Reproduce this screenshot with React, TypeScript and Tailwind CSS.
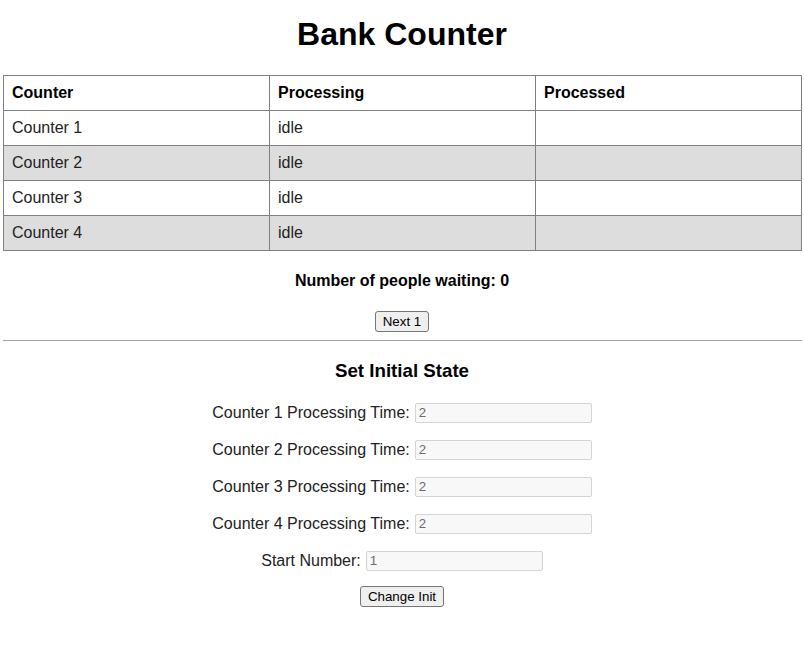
import { useState } from 'react';

type Counter = { name: string; processing: string; processed: string };

export default function App() {
  const [counters] = useState<Counter[]>([
    { name: 'Counter 1', processing: 'idle', processed: '' },
    { name: 'Counter 2', processing: 'idle', processed: '' },
    { name: 'Counter 3', processing: 'idle', processed: '' },
    { name: 'Counter 4', processing: 'idle', processed: '' },
  ]);
  const [times, setTimes] = useState(['2', '2', '2', '2']);
  const [startNumber, setStartNumber] = useState('1');
  const waiting = 0;

  const btn =
    'border border-[#767676] rounded-[3px] bg-[#efefef] px-[7px] py-[1px] leading-[17px] text-[13.33px] text-black';
  const input =
    'w-[177px] h-[20px] border border-[#d4d4d4] rounded-[2px] bg-[#f8f8f8] px-[3px] text-[13.33px] text-[#6d6d6d] outline-none';

  return (
    <div className="min-h-screen bg-white text-black font-['Liberation_Sans',Arial,sans-serif]">
      <h1 className="pt-[16px] text-center text-[32px] font-bold leading-[37px]">Bank Counter</h1>

      {/* Counters table */}
      <table className="mt-[22px] ml-[3px] w-[799px] border-collapse text-[16px] table-fixed">
        <thead>
          <tr className="h-[35px]">
            <th className="border border-[#808080] px-[8px] text-left font-bold">Counter</th>
            <th className="border border-[#808080] px-[8px] text-left font-bold">Processing</th>
            <th className="border border-[#808080] px-[8px] text-left font-bold">Processed</th>
          </tr>
        </thead>
        <tbody>
          {counters.map((c, i) => (
            <tr key={c.name} className={`h-[35px] ${i % 2 === 1 ? 'bg-[#dddddd]' : 'bg-white'}`}>
              <td className="border border-[#808080] px-[8px] text-[#222]">{c.name}</td>
              <td className="border border-[#808080] px-[8px] text-[#222]">{c.processing}</td>
              <td className="border border-[#808080] px-[8px]">{c.processed}</td>
            </tr>
          ))}
        </tbody>
      </table>

      <p className="mt-[21px] text-center text-[16px] font-bold leading-[18px]">
        Number of people waiting: {waiting}
      </p>
      <div className="mt-[21px] flex justify-center">
        <button className={btn}>Next 1</button>
      </div>

      <hr className="mt-[8px] ml-[3px] w-[799px] border-0 border-t border-[#a0a0a0]" />

      {/* Initial state form */}
      <h3 className="mt-[19px] text-center text-[18.72px] font-bold leading-[22px]">Set Initial State</h3>
      <div className="mt-[21px] flex flex-col items-center gap-[17px] text-[16px] text-[#222]">
        {times.map((t, i) => (
          <label key={i} className="flex items-center gap-[5px] leading-[20px]">
            Counter {i + 1} Processing Time:
            <input
              className={`${input} -mt-[1px]`}
              value={t}
              onChange={(e) => setTimes(prev => prev.map((v, j) => (j === i ? e.target.value : v)))}
            />
          </label>
        ))}
        <label className="flex items-center gap-[5px] leading-[20px]">
          Start Number:
          <input
            className={`${input} -mt-[1px]`}
            value={startNumber}
            onChange={(e) => setStartNumber(e.target.value)}
          />
        </label>
      </div>
      <div className="mt-[15px] flex justify-center">
        <button className={btn}>Change Init</button>
      </div>
    </div>
  );
}
